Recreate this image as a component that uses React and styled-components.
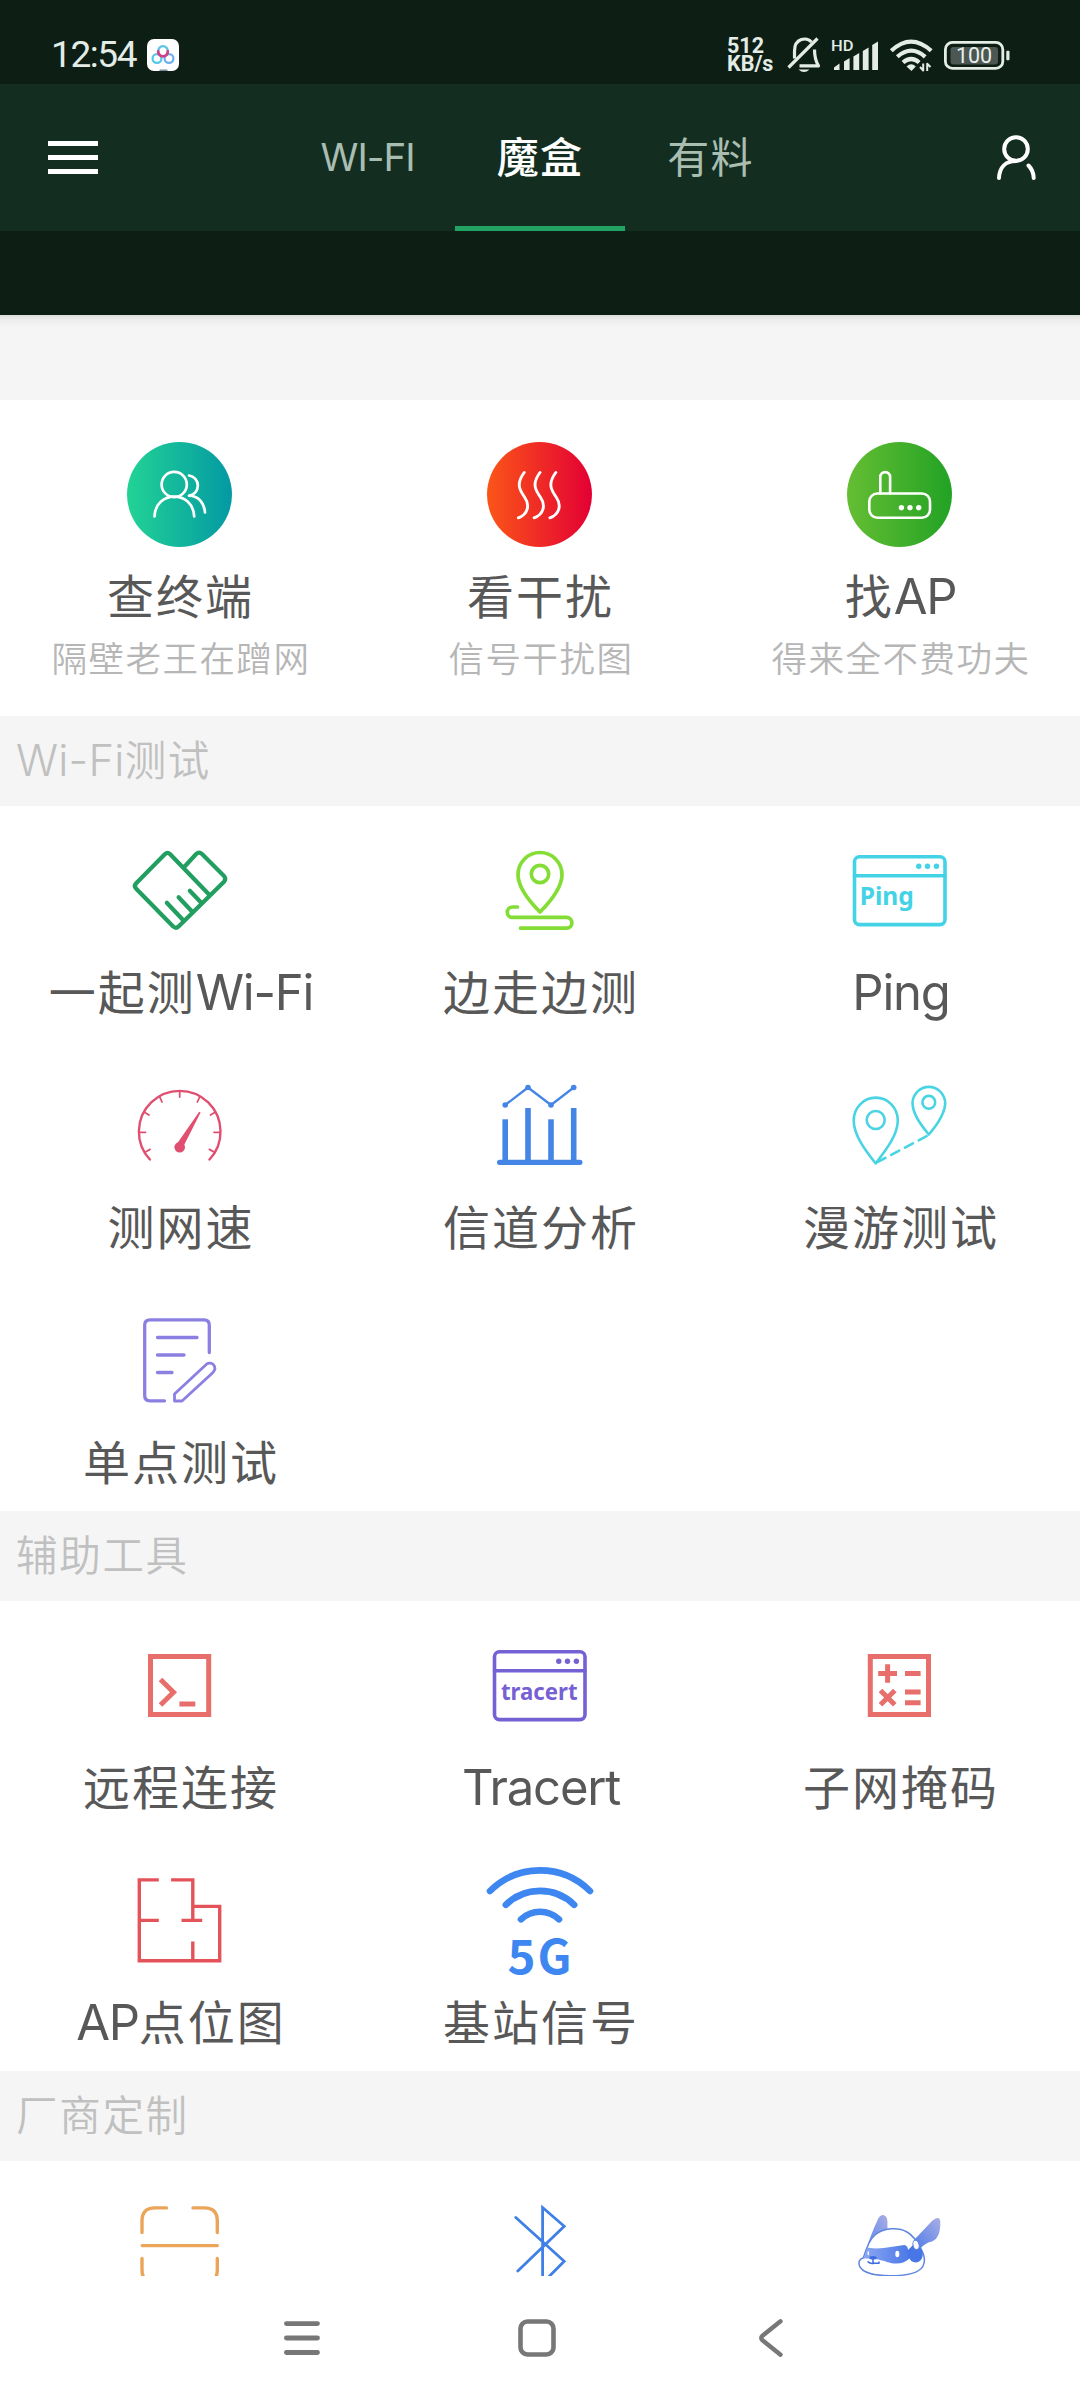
import React from "react";
import styled, { createGlobalStyle } from "styled-components";

const GlobalStyle = createGlobalStyle`
  * { box-sizing: border-box; }
  body { margin: 0; background: #fff; }
`;

const Screen = styled.div`
  width: 1080px;
  height: 2400px;
  display: flex;
  flex-direction: column;
  overflow: hidden;
  background: #fff;
  font-family: Inter, "Noto Sans CJK SC", sans-serif;
`;

/* ---------- status bar ---------- */
const StatusBar = styled.div`
  height: 84px;
  flex: none;
  display: flex;
  align-items: center;
  justify-content: space-between;
  padding: 26px 59px 0 51px;
  background: #0d1e15;
  color: #e3ece5;
`;
const StatusGroup = styled.div`
  display: flex;
  align-items: center;
  height: 58px;
`;
const Clock = styled.span`
  font: 400 37px/58px Roboto, sans-serif;
  letter-spacing: -1.4px;
  width: 96px;
`;
const Speed = styled.div`
  font: 700 21.5px/18px Roboto, sans-serif;
  width: 60px;
  white-space: pre;
`;
const SignalBox = styled.div`
  display: flex;
  margin: 0 11px 0 11px;
`;

/* ---------- app bar ---------- */
const AppBar = styled.header`
  height: 147px;
  flex: none;
  display: flex;
  justify-content: space-between;
  align-items: center;
  padding: 0 44px 0 48px;
  background: #132e21;
`;
const MenuButton = styled.div`
  width: 236px;
  display: flex;
  flex-direction: column;
  gap: 8.5px;
`;
const MenuLine = styled.span`
  width: 50px;
  height: 5.5px;
  background: #fff;
`;
const Tabs = styled.nav`
  display: flex;
  height: 147px;
`;
const Tab = styled.div`
  width: 170.5px;
  padding-top: 5px;
  padding-right: ${(p) => (p.$latin ? 4 : 0)}px;
  border-bottom: 5px solid ${(p) => (p.$active ? "#22a363" : "transparent")};
  color: ${(p) => (p.$active ? "#fff" : "#aabdb1")};
  font-size: ${(p) => (p.$latin ? 38.5 : 42)}px;
  font-weight: ${(p) => (p.$active ? 500 : 400)};
  letter-spacing: ${(p) => (p.$latin ? -1 : 1.2)}px;
  line-height: 137px;
  text-align: center;
`;
const UserButton = styled.div`
  width: 240px;
  display: flex;
  justify-content: flex-end;
`;
const DarkStrip = styled.div`
  height: 84px;
  flex: none;
  background: #0d1e15;
`;
const Spacer = styled.div`
  height: 85px;
  flex: none;
  background: linear-gradient(#dadeda 0, #ebebeb 4px, #f5f5f5 12px);
`;

/* ---------- content ---------- */
const Content = styled.main`
  height: 1876px;
  flex: none;
  overflow: hidden;
`;
const Featured = styled.section`
  height: 316px;
  display: grid;
  grid-template-columns: repeat(3, 1fr);
`;
const FeatureTile = styled.div`
  display: flex;
  flex-direction: column;
  align-items: center;
  padding-top: 42px;
`;
const Circle = styled.div`
  width: 105px;
  height: 105px;
  margin-right: 2px;
  border-radius: 50%;
  background: linear-gradient(90deg, ${(p) => p.$from}, ${(p) => p.$to});
`;
const FeatureTitle = styled.div`
  margin-top: 18px;
  padding-left: 1px;
  font-size: 47px;
  line-height: 64px;
  letter-spacing: 2px;
  color: #585858;
  white-space: nowrap;
`;
const FeatureNote = styled.div`
  padding-left: 2px;
  font-size: 35.5px;
  line-height: 62px;
  letter-spacing: 1.5px;
  color: #b6b6b6;
  font-weight: 350;
  white-space: nowrap;
`;
const SectionTitle = styled.h2`
  margin: 0;
  height: 90px;
  padding-left: 16px;
  background: #f5f5f5;
  color: #c0c0c0;
  font-size: 41.5px;
  font-weight: 350;
  line-height: 90px;
  letter-spacing: 1.7px;
`;
const Grid = styled.section`
  display: grid;
  grid-template-columns: repeat(3, 1fr);
  grid-auto-rows: 235px;
`;
const Tile = styled.div`
  display: flex;
  flex-direction: column;
  align-items: center;
  padding-top: 30px;
  & > svg { margin-right: 1px; }
`;
const TileLabel = styled.div`
  padding: 1px 0 0 2px;
  font-size: 47px;
  line-height: 96px;
  letter-spacing: 2px;
  color: #585858;
  white-space: nowrap;
`;
const Latin = styled.span`
  font-size: ${(p) => p.$size || 49}px;
  letter-spacing: ${(p) => (p.$spacing === undefined ? -1.2 : p.$spacing)}px;
  line-height: 1;
`;

/* ---------- system navigation ---------- */
const NavBar = styled.footer`
  height: 124px;
  flex: none;
  display: flex;
  align-items: center;
  gap: 194.5px;
  padding-left: 282px;
  background: #fff;
`;

const Glyph = styled.svg`
  display: block;
  flex: none;
  overflow: visible;
  fill: none;
  stroke: ${(p) => p.$color || "#fff"};
  stroke-width: ${(p) => p.$weight || 3.5};
  stroke-linecap: ${(p) => p.$cap || "round"};
  stroke-linejoin: ${(p) => p.$join || "round"};
  & .solid { fill: ${(p) => p.$color || "#fff"}; stroke: none; }
`;
const IconText = styled.text`
  font-family: "Noto Sans", sans-serif;
  font-weight: 700;
  font-size: ${(p) => p.$size}px;
  stroke: none;
  fill: ${(p) => p.$color};
`;

function Mixed({ text, size, spacing }) {
  return text.split(/([A-Za-z-]+)/).filter(Boolean).map((part, i) =>
    /[A-Za-z]/.test(part)
      ? <Latin key={i} $size={size} $spacing={spacing}>{part}</Latin>
      : <React.Fragment key={i}>{part}</React.Fragment>
  );
}

function TileIcon({ color, weight, cap, join, children }) {
  return (
    <Glyph width="108" height="108" viewBox="0 0 108 108" $color={color} $weight={weight} $cap={cap} $join={join}>
      {children}
    </Glyph>
  );
}

const Handshake = () => (
  <TileIcon color="#229f60" weight={4.2}>
    <path d="M84 59.5L44.2 18.2Q41.5 15.5 38.8 18.2L10.2 47.3Q7.5 50 10.2 52.8L47.2 90.5Q50 93 52.8 90.2L98 45.7Q100.5 43 98 40L76 18Q73 15.3 70.2 18L58.2 31" />
    <path d="M40.8 66.8L57.5 84.5M52.6 61.3L66.5 76M63.8 54.8L75.5 67" />
  </TileIcon>
);
const WalkPin = () => (
  <TileIcon color="#84dd34" weight={3.7}>
    <path d="M54 76C43 65 32 52 32 38.5A22 22 0 0 1 76 38.5C76 52 65 65 54 76Z" />
    <circle cx="54" cy="38" r="8.7" />
    <path d="M31.5 71H26.5A5.2 5.2 0 0 0 26.5 81.4H80.5A5.4 5.4 0 0 1 80.5 92.2H34.5" />
  </TileIcon>
);
const BrowserBox = ({ color, children }) => (
  <TileIcon color={color} weight={3.6}>
    <rect x="8.5" y="20.8" width="90.5" height="67.8" rx="5" />
    <path d="M8.5 39.8H99" />
    <g className="solid">
      <circle cx="72.8" cy="30.2" r="2.7" />
      <circle cx="81.5" cy="30.2" r="2.7" />
      <circle cx="90.4" cy="30.2" r="2.7" />
    </g>
    {children}
  </TileIcon>
);
const Ping = () => (
  <BrowserBox color="#43d2e6">
    <IconText x="13.8" y="69" $size={24.5} $color="#43d2e6" textLength="54" lengthAdjust="spacingAndGlyphs">Ping</IconText>
  </BrowserBox>
);
const Tracert = () => (
  <BrowserBox color="#7560d4">
    <IconText x="15" y="69" $size={23.5} $color="#7560d4" textLength="76.5" lengthAdjust="spacingAndGlyphs">tracert</IconText>
  </BrowserBox>
);
const Gauge = () => (
  <TileIcon color="#e04f70" weight={2.4}>
    <path d="M23.9 88.5A40.8 40.8 0 1 1 83.5 88.5" />
    <path strokeWidth="1.8" d="M13 61.3H19.5M94 61.3H88M53.7 20V26M18 41L23 44M89.5 41L84.5 44M33.5 25.5L36 31M73.9 25.5L71.4 31M19 81.2L24 78.4M88.4 81.2L83.4 78.4" />
    <path className="solid" d="M74.6 41.5L73.2 40.7L50.8 73L57 76.3Z" />
    <circle className="solid" cx="53.7" cy="76.2" r="5.3" />
  </TileIcon>
);
const Chart = () => (
  <TileIcon color="#4585e6" weight={2.3}>
    <path d="M19.2 34L42 16.5L65 34L87.7 16.5" />
    <g className="solid">
      <circle cx="19.2" cy="34" r="2.8" /><circle cx="42" cy="16.5" r="2.8" />
      <circle cx="65" cy="34" r="2.8" /><circle cx="87.7" cy="16.5" r="2.8" />
      <rect x="16.4" y="48.3" width="5.6" height="43" /><rect x="39.2" y="37" width="5.6" height="54" />
      <rect x="62.2" y="48.3" width="5.6" height="43" /><rect x="84.9" y="37" width="5.6" height="54" />
      <rect x="11" y="88.7" width="85.5" height="5.2" rx="2.6" />
    </g>
  </TileIcon>
);
const Roam = () => (
  <TileIcon color="#49d4e4" weight={2.6}>
    <path d="M29.7 92.5C19 79 7.7 64 7.7 49.5A22 22.8 0 0 1 51.8 49.5C51.8 64 40 79 29.7 92.5Z" />
    <circle cx="29.7" cy="49" r="9" />
    <path d="M82.8 63.5C75 54 66.5 43 66.5 31.5A16.4 17 0 0 1 99.2 31.5C99.2 43 91 54 82.8 63.5Z" />
    <circle cx="82.8" cy="31.3" r="6.4" />
    <path strokeDasharray="9 6.5" d="M31.5 91L82 64.5" />
  </TileIcon>
);
const NotePen = () => (
  <TileIcon color="#8b80e2" weight={3.3}>
    <path d="M83.3 46.5V19Q83.3 13.8 78 13.8H24Q18.7 13.8 18.7 19V89.5Q18.7 94.8 24 94.8H38.5" />
    <path d="M31.5 31.5H71M31.5 49H58M31.5 66.5H46" />
    <path d="M48.5 95V88L80.5 58.2C86 54.5 92 61 86.7 66.8L56 95Z" strokeWidth="2.8" />
  </TileIcon>
);
const Terminal = () => (
  <TileIcon color="#e76e6b" weight={5} cap="butt" join="miter">
    <rect x="24.5" y="25.5" width="58.2" height="58" />
    <path d="M34.5 48.5L47.5 61.2L34.5 74M53.4 73H69.3" />
  </TileIcon>
);
const MaskCalc = () => (
  <TileIcon color="#e76e6b" weight={5} cap="butt" join="miter">
    <rect x="24.3" y="25.5" width="58.2" height="58" />
    <path d="M32.2 42.5H51M41.6 33.2V51.8M59 42.5H74.6M34.5 59.5L48.8 73.8M48.8 59.5L34.5 73.8M59 61H74.6M59 71.7H74.6" />
  </TileIcon>
);
const FloorPlan = () => (
  <TileIcon color="#e5535a" weight={3.4} cap="butt" join="miter">
    <path d="M32.8 13.9H13.3V94.7H93.7V40.4H66.8M45.1 13.9H66.8V54.4M13.3 54.4H32.8M55.5 54.4H76.2M66.8 75.6V94.7" />
  </TileIcon>
);
const FiveGText = styled.text`
  font: 700 47.5px "Noto Sans CJK SC", sans-serif;
  letter-spacing: 2px;
  fill: #3f87f0;
  stroke: none;
`;
const FiveG = () => (
  <TileIcon color="#3f87f0" weight={6.6}>
    <path d="M4 25A71 71 0 0 1 104 25M19.8 38.8A49 49 0 0 1 88.2 38.8M35 53.3A27.5 27.5 0 0 1 73 53.3" />
    <FiveGText x="54.5" y="107.5" textAnchor="middle">5G</FiveGText>
  </TileIcon>
);
const Scan = () => (
  <TileIcon color="#eba55a" weight={3.4}>
    <path d="M40.5 16.9H29Q16 16.9 16 30V41.5M67 16.9H78.3Q91.3 16.9 91.3 30V41.5M16.2 54.6H91.3M16 67.5V79Q16 92 29 92H40.5M91.3 67.5V79Q91.3 92 78.3 92H67" />
  </TileIcon>
);
const Bluetooth = () => (
  <TileIcon color="#4080e6" weight={2.8} join="miter">
    <path d="M29.8 26.5L78.2 70.3L56.6 92V16.5L78.2 35.2L31.8 80" />
  </TileIcon>
);
const Mascot = () => (
  <TileIcon color="#5f85de" weight={1.5}>
    <defs>
      <linearGradient id="mask" x1="0" x2="1"><stop offset="0" stopColor="#8aa7f3" /><stop offset="1" stopColor="#4876e6" /></linearGradient>
      <linearGradient id="ear" x1="1" x2="0" y1="0" y2="1"><stop offset="0" stopColor="#a9aee6" /><stop offset="1" stopColor="#4f7ce8" /></linearGradient>
    </defs>
    <path fill="url(#ear)" stroke="none" d="M18 65C22 52 26 41 32 28C35 22 41 23 41.4 30L41.5 38.5C30 42 25 52 18 65Z" />
    <path fill="url(#ear)" stroke="none" d="M68 49L86 30Q94 23.5 94.3 31C94.5 40 92.5 48 86 50.5Q80 51 74 58Z" />
    <path fill="#fff" d="M17.3 67C21 55 24 48 29 44C37 37 52 35.5 61 41C68 45 72 52 75 58C79 65 79.5 70 77 75C73 83 58 84.7 44 84.7C31 84.7 18 82.5 14 76C11.5 71 14 67.5 17.3 67Z" />
    <path fill="url(#mask)" stroke="none" d="M21.5 56.5C34 59 46 55.5 58.5 54Q62 55 62 59L66 58L64 67Q58 73 49 72.5C40 72 36 67 17.5 67.5Z" />
    <path fill="#4876e6" stroke="none" d="M61 60L68 53L75 57C79 64 76 71 70 71.5Q64 71 63 66Z" />
    <ellipse cx="70" cy="53.8" rx="3" ry="4.7" fill="#fff" transform="rotate(-14 70 53.8)" strokeWidth="1" />
    <ellipse cx="51.3" cy="63" rx="2" ry="3.3" fill="#fff" stroke="none" />
    <path stroke="#fff" strokeWidth="1.4" d="M22.3 61V63.5" />
    <ellipse cx="27" cy="66.8" rx="3.8" ry="1.8" fill="#3f6de0" stroke="none" />
    <path stroke="#3f6de0" strokeWidth="1.5" d="M27 67V72M22 70.8Q24 73 28 72.3H33V71" />
  </TileIcon>
);

const Users = () => (
  <Glyph width="105" height="105" viewBox="0 0 105 105" $weight={2.7}>
    <circle cx="47.2" cy="42.5" r="12.6" />
    <path d="M27.5 74.5C28.5 48 66 48 67.2 74.5M62 33.5A10.3 10.2 0 0 1 62 53.7C71.5 54 77.3 61 78 70.5" />
  </Glyph>
);
const Waves = () => (
  <Glyph width="105" height="105" viewBox="0 0 105 105" $weight={2.9}>
    {[0, 15.8, 31.6].map((x) => (
      <path key={x} transform={`translate(${x} 0)`} d="M37.2 30.5C28.5 42 33 48.5 37.5 55C43.5 63.5 40.5 72.5 31.3 75.8" />
    ))}
  </Glyph>
);
const Router = () => (
  <Glyph width="105" height="105" viewBox="0 0 105 105" $weight={2.6}>
    <rect x="22.3" y="51.5" width="60.7" height="24.2" rx="8" />
    <path d="M33.3 51.5V35A4.9 4.9 0 0 1 43.1 35V51.5" />
    <g className="solid"><circle cx="54.4" cy="65.7" r="2.7" /><circle cx="63" cy="65.7" r="2.7" /><circle cx="71.7" cy="65.7" r="2.7" /></g>
  </Glyph>
);

const AppBadge = () => (
  <Glyph width="32" height="32" viewBox="0 0 32 32" $weight={2.3}>
    <rect className="solid" width="32" height="32" rx="7" />
    <circle cx="10" cy="19.5" r="4.4" stroke="#57c7ea" />
    <circle cx="22" cy="19.5" r="4.4" stroke="#6fb0ec" />
    <circle cx="16" cy="12.3" r="4.8" fill="#fff" stroke="none" />
    <path d="M11.2 12A4.8 4.8 0 1 1 20.8 12" stroke="#5cc3ea" />
    <path d="M11.2 12.5A4.8 4.8 0 1 0 20.8 12.5" stroke="#cf3f88" strokeWidth="2.8" />
    <path d="M13 31.2H20" stroke="#7889a0" strokeWidth="1.4" />
  </Glyph>
);
const BellOff = () => (
  <Glyph width="34" height="38" viewBox="0 0 34 38" $color="#e3ece5" $weight={3.2} $cap="butt">
    <path d="M7.5 22.5V15C7.5 2 20 .5 24.5 6M27.5 13.5C27.5 21 28.5 25 31.5 29.8H12.5" />
    <path d="M1.5 31.5L30.5 2.5" />
    <path className="solid" d="M11.5 33.5H22.5Q17 38.5 11.5 33.5Z" />
  </Glyph>
);
const HdText = styled.text`
  font: 500 14.5px Roboto, sans-serif;
  fill: #e3ece5;
  stroke: none;
`;
const Signal = () => (
  <Glyph width="47" height="34" viewBox="0 0 47 34" $color="#e3ece5">
    <HdText x="-1" y="12.5" textLength="22.5" lengthAdjust="spacingAndGlyphs">HD</HdText>
    <g className="solid">
      <path d="M2 32V29.5L7.5 25.5V32ZM12 32V23.5L17.6 20V32ZM21.4 32V18.5L27.2 15V32ZM30.8 32V13L36.6 9.5V32ZM40.2 32V7L46 3.5V32Z" />
    </g>
  </Glyph>
);
const Wifi = () => (
  <Glyph width="43" height="34" viewBox="0 0 43 34" $color="#e3ece5" $weight={4.2} $cap="butt">
    <path d="M1.3 12.8Q21 -5.5 41.2 12.8M7.3 18.8Q21.2 6.5 35.2 18.8M13 24.5Q21.2 17.5 29.2 24.5" />
    <path className="solid" d="M16.5 28.5Q21.2 24 25.8 28.5L21.5 33Z" />
    <path strokeWidth="2" d="M33.2 25.5V32.5L30 29M37.2 33V25.8L40.5 29" />
  </Glyph>
);
const BatteryText = styled.text`
  font: 400 21.5px Roboto, sans-serif;
  fill: #e8f0ea;
  stroke: none;
`;
const Battery = () => (
  <Glyph width="66" height="29" viewBox="0 0 66 29" $color="#e3ece5" $weight={2.8}>
    <rect x="1.4" y="1.4" width="57.4" height="26" rx="7" />
    <rect x="6.5" y="6" width="47.5" height="17.5" rx="3" fill="#4c5753" stroke="none" />
    <rect className="solid" x="62.3" y="9.8" width="3.2" height="9.5" rx="1" />
    <BatteryText x="12" y="22.3" textLength="36">100</BatteryText>
  </Glyph>
);
const User = () => (
  <Glyph width="40" height="46" viewBox="0 0 40 46" $weight={4}>
    <circle cx="20" cy="14" r="11.8" />
    <path d="M3 43C3.5 32 10 26 20 26M32.5 30.5Q37.5 35.5 37.7 43" />
  </Glyph>
);

const wifiTools = [
  ["一起测Wi-Fi", Handshake], ["边走边测", WalkPin], ["Ping", Ping],
  ["测网速", Gauge], ["信道分析", Chart], ["漫游测试", Roam], ["单点测试", NotePen],
];
const helperTools = [
  ["远程连接", Terminal], ["Tracert", Tracert], ["子网掩码", MaskCalc],
  ["AP点位图", FloorPlan], ["基站信号", FiveG],
];
const vendorTools = [["", Scan], ["", Bluetooth], ["", Mascot]];

function ToolSection({ title, tools }) {
  return (
    <>
      <SectionTitle><Mixed text={title} size={43.5} spacing={0.2} /></SectionTitle>
      <Grid>
        {tools.map(([label, Icon], i) => (
          <Tile key={i}>
            <Icon />
            <TileLabel><Mixed text={label} /></TileLabel>
          </Tile>
        ))}
      </Grid>
    </>
  );
}

export default function App() {
  return (
    <Screen>
      <GlobalStyle />
      <StatusBar>
        <StatusGroup>
          <Clock>12:54</Clock>
          <AppBadge />
        </StatusGroup>
        <StatusGroup>
          <Speed>{"512\nKB/s"}</Speed>
          <BellOff />
          <SignalBox><Signal /></SignalBox>
          <Wifi />
          <SignalBox><Battery /></SignalBox>
        </StatusGroup>
      </StatusBar>
      <AppBar>
        <MenuButton><MenuLine /><MenuLine /><MenuLine /></MenuButton>
        <Tabs>
          <Tab $latin>WI-FI</Tab>
          <Tab $active>魔盒</Tab>
          <Tab>有料</Tab>
        </Tabs>
        <UserButton><User /></UserButton>
      </AppBar>
      <DarkStrip />
      <Spacer />
      <Content>
        <Featured>
          <FeatureTile>
            <Circle $from="#22d395" $to="#0499a3"><Users /></Circle>
            <FeatureTitle>查终端</FeatureTitle>
            <FeatureNote>隔壁老王在蹭网</FeatureNote>
          </FeatureTile>
          <FeatureTile>
            <Circle $from="#fb5518" $to="#e30034"><Waves /></Circle>
            <FeatureTitle>看干扰</FeatureTitle>
            <FeatureNote>信号干扰图</FeatureNote>
          </FeatureTile>
          <FeatureTile>
            <Circle $from="#65be33" $to="#22a224"><Router /></Circle>
            <FeatureTitle><Mixed text="找AP" /></FeatureTitle>
            <FeatureNote>得来全不费功夫</FeatureNote>
          </FeatureTile>
        </Featured>
        <ToolSection title="Wi-Fi测试" tools={wifiTools} />
        <ToolSection title="辅助工具" tools={helperTools} />
        <ToolSection title="厂商定制" tools={vendorTools} />
      </Content>
      <NavBar>
        <Glyph width="40" height="40" viewBox="0 0 40 40" $color="#777" $weight={4.8}>
          <path d="M4.4 5.6H35.5M4.4 20H35.5M4.4 34.5H35.5" />
        </Glyph>
        <Glyph width="40" height="40" viewBox="0 0 40 40" $color="#777" $weight={4.6}>
          <rect x="3.5" y="3.5" width="33" height="33" rx="7" />
        </Glyph>
        <Glyph width="40" height="40" viewBox="0 0 40 40" $color="#777" $weight={4.4}>
          <path d="M29.5 3.3L11.5 17.7Q9 20 11.5 22.3L29.5 36.7" />
        </Glyph>
      </NavBar>
    </Screen>
  );
}
